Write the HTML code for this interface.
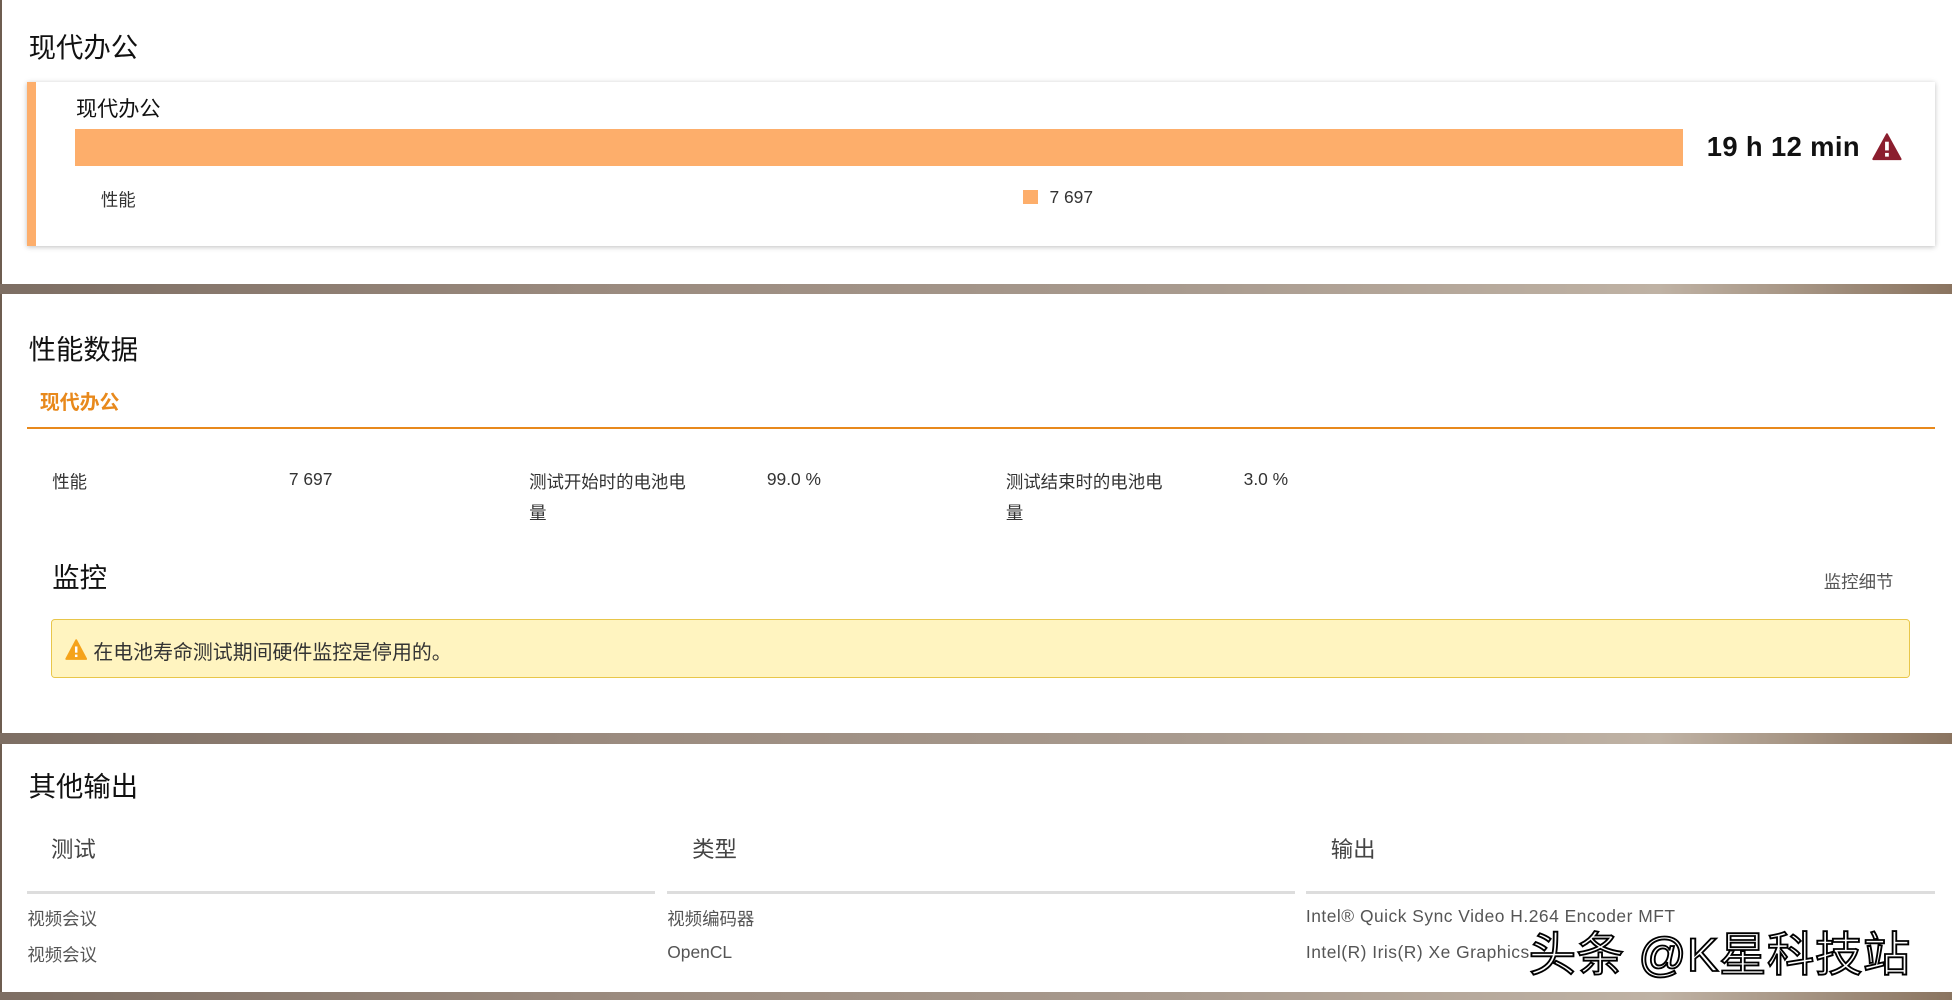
<!DOCTYPE html>
<html><head><meta charset="utf-8"><style>
html,body{margin:0;padding:0;width:1952px;height:1000px;overflow:hidden;background:#fff}
#w{zoom:1.2449;width:1568px;height:803px;position:relative;font-family:"Liberation Sans","Noto Sans CJK SC",sans-serif;color:#222}
.a{position:absolute;white-space:nowrap}
.band{position:absolute;left:0;width:1568px;background:linear-gradient(90deg,#7d6e63,#9a8a7e 30%,#a89a8e 60%,#bfb2a4 85%,#8a7460)}
.t{font-family:"Noto Sans CJK SC",sans-serif;font-size:22px;color:#111}
.s{font-size:14px;color:#333}
</style></head><body><div id="w">
<div class="a" style="left:0;top:0;width:2px;height:803px;background:#6e5d50"></div>
<div class="band" style="top:228px;height:8px"></div>
<div class="band" style="top:589px;height:9px"></div>
<div class="band" style="top:797px;height:6px"></div>

<div class="a t" style="left:23px;top:20px">现代办公</div>
<div class="a" style="left:22px;top:66px;width:1532px;height:132px;background:#fff;box-shadow:0 1px 4px rgba(0,0,0,.25);border-left:8px solid #fdae6b;box-sizing:border-box"></div>
<div class="a" style="left:61px;top:74px;font-size:17px;color:#111">现代办公</div>
<div class="a" style="left:60px;top:104px;width:1292px;height:29px;background:#fdae6b"></div>
<div class="a" style="left:1371px;top:105px;font-size:22px;font-weight:bold;color:#111;letter-spacing:0.3px">19 h 12 min</div>
<svg class="a" style="left:1504px;top:107px" width="24" height="22" viewBox="0 0 24 22"><path d="M12 1 L23 21 L1 21 Z" fill="#8b1e2e" stroke="#8b1e2e" stroke-linejoin="round" stroke-width="1.5"/><rect x="10.5" y="7" width="3" height="7" fill="#fff"/><rect x="10.5" y="16" width="3" height="3" fill="#fff"/></svg>
<div class="a s" style="left:81px;top:150px">性能</div>
<div class="a" style="left:822px;top:153px;width:12px;height:11px;background:#fdae6b"></div>
<div class="a s" style="left:843px;top:150px">7 697</div>

<div class="a t" style="left:23px;top:263px">性能数据</div>
<div class="a" style="left:32px;top:310px;font-size:16px;font-weight:bold;color:#e8891c">现代办公</div>
<div class="a" style="left:22px;top:343px;width:1532px;height:2px;background:#e8891c"></div>
<div class="a s" style="left:42px;top:377px">性能</div>
<div class="a s" style="left:232px;top:377px">7 697</div>
<div class="a s" style="left:425px;top:375px;white-space:normal;width:130px;line-height:25px">测试开始时的电池电量</div>
<div class="a s" style="left:616px;top:377px">99.0 %</div>
<div class="a s" style="left:808px;top:375px;white-space:normal;width:130px;line-height:25px">测试结束时的电池电量</div>
<div class="a s" style="left:999px;top:377px">3.0 %</div>
<div class="a t" style="left:42px;top:446px">监控</div>
<div class="a" style="left:1465px;top:457px;font-size:14px;color:#555">监控细节</div>
<div class="a" style="left:41px;top:497px;width:1493px;height:48px;background:#fff4c0;border:1px solid #e8c64a;border-radius:3px;box-sizing:border-box"></div>
<svg class="a" style="left:52px;top:513px" width="18" height="17" viewBox="0 0 18 17"><path d="M9 1 L17 16 L1 16 Z" fill="#f5a31a" stroke="#f5a31a" stroke-linejoin="round" stroke-width="1.5"/><rect x="8" y="6" width="2" height="5" fill="#fff"/><rect x="8" y="12.5" width="2" height="2" fill="#fff"/></svg>
<div class="a" style="left:75px;top:511px;font-size:16px;color:#333">在电池寿命测试期间硬件监控是停用的。</div>

<div class="a t" style="left:23px;top:614px">其他输出</div>
<div class="a" style="left:41px;top:668px;font-size:18px;color:#444">测试</div>
<div class="a" style="left:556px;top:668px;font-size:18px;color:#444">类型</div>
<div class="a" style="left:1069px;top:668px;font-size:18px;color:#444">输出</div>
<div class="a" style="left:22px;top:716px;width:504px;height:2px;background:#ddd"></div>
<div class="a" style="left:536px;top:716px;width:504px;height:2px;background:#ddd"></div>
<div class="a" style="left:1049px;top:716px;width:505px;height:2px;background:#ddd"></div>
<div class="a s" style="left:22px;top:728px;color:#555">视频会议</div>
<div class="a s" style="left:536px;top:728px;color:#555">视频编码器</div>
<div class="a s" style="left:1049px;top:728px;color:#555;letter-spacing:0.4px">Intel® Quick Sync Video H.264 Encoder MFT</div>
<div class="a s" style="left:22px;top:757px;color:#555">视频会议</div>
<div class="a s" style="left:536px;top:757px;color:#555">OpenCL</div>
<div class="a s" style="left:1049px;top:757px;color:#555;letter-spacing:0.4px">Intel(R) Iris(R) Xe Graphics</div>
<div class="a" style="left:1228px;top:736px;font-size:38px;color:#fff;-webkit-text-stroke:1.5px #000;font-family:'Liberation Sans','Noto Sans CJK SC',sans-serif;letter-spacing:0.5px">头条 @K星科技站</div>
</div></body></html>
